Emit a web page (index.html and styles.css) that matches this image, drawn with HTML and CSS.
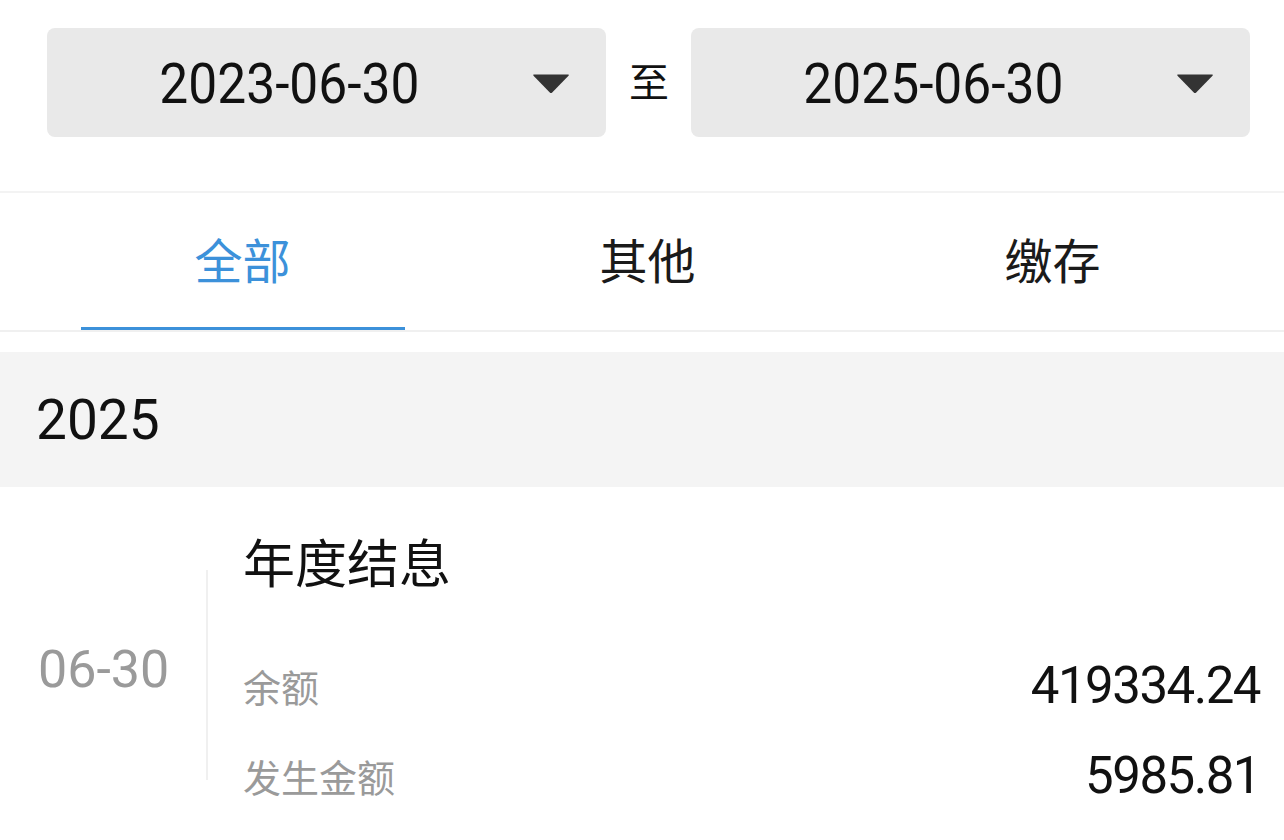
FILE: index.html
```html
<!DOCTYPE html>
<html lang="zh-CN">
<head>
<meta charset="utf-8">
<title>明细</title>
<link rel="stylesheet" href="styles.css">
</head>
<body>
<div class="page">
  <div class="range">
    <div class="picker">
      <div class="picker-text"><span class="date">2023-06-30</span></div>
      <svg class="caret" width="38" height="21" viewBox="0 0 38 21"><path d="M2 1.5 H36 Q37.5 1.5 36.5 2.8 L20.2 19.5 Q19 20.6 17.8 19.5 L1.5 2.8 Q0.5 1.5 2 1.5 Z" fill="#333"/></svg>
    </div>
    <div class="to">至</div>
    <div class="picker">
      <div class="picker-text"><span class="date">2025-06-30</span></div>
      <svg class="caret" width="38" height="21" viewBox="0 0 38 21"><path d="M2 1.5 H36 Q37.5 1.5 36.5 2.8 L20.2 19.5 Q19 20.6 17.8 19.5 L1.5 2.8 Q0.5 1.5 2 1.5 Z" fill="#333"/></svg>
    </div>
  </div>

  <div class="tabs">
    <div class="tab active"><span>全部</span></div>
    <div class="tab"><span>其他</span></div>
    <div class="tab"><span>缴存</span></div>
  </div>

  <div class="year">2025</div>

  <div class="item">
    <div class="item-date">06-30</div>
    <div class="divider"></div>
    <div class="item-body">
      <div class="item-title">年度结息</div>
      <div class="row"><span class="label">余额</span><span class="value">419334.24</span></div>
      <div class="row"><span class="label">发生金额</span><span class="value">5985.81</span></div>
    </div>
  </div>
</div>
</body>
</html>
```

FILE: styles.css
```css
html, body {
  margin: 0;
  padding: 0;
  background: #ffffff;
}

body {
  font-family: Roboto, "Noto Sans CJK SC", "Noto Sans", sans-serif;
  color: #111111;
}

.page {
  width: 1284px;
  height: 840px;
  overflow: hidden;
}

/* date range */
.range {
  display: flex;
  align-items: center;
  padding: 28px 34px 0 47px;
  height: 109px;
}

.picker {
  width: 559px;
  height: 109px;
  background: #e9e9e9;
  border-radius: 8px;
  display: flex;
  align-items: center;
  flex-shrink: 0;
}

.picker-text {
  flex: 1;
  display: flex;
  justify-content: center;
}

.date {
  display: inline-block;
  font-size: 56px;
  line-height: 60px;
  color: #111;
  transform: scaleX(0.92);
  margin-top: 2px;
}

.caret {
  margin-right: 36px;
  margin-top: 2px;
  flex-shrink: 0;
}

.to {
  width: 38px;
  margin: -6px 24px 0 23px;
  font-family: "Noto Sans CJK SC", sans-serif;
  font-size: 40px;
  line-height: 44px;
  color: #111;
  text-align: center;
}

/* tabs */
.tabs {
  margin-top: 54px;
  border-top: 2px solid #f3f3f3;
  border-bottom: 2px solid #f0f0f0;
  display: flex;
  padding: 0 29px 0 40px;
  height: 137px;
}

.tab {
  flex: 1;
  position: relative;
  display: flex;
  align-items: center;
  justify-content: center;
  font-family: "Noto Sans CJK SC", sans-serif;
  font-size: 48px;
  color: #1a1a1a;
}

.tab span {
  margin-top: -8px;
}

.tab.active {
  color: #3c91da;
}

.tab.active::after {
  content: "";
  position: absolute;
  left: 10%;
  right: 10%;
  bottom: 0;
  height: 3px;
  background: #3c91da;
}

/* year header */
.year {
  margin-top: 20px;
  height: 135px;
  background: #f4f4f4;
  display: flex;
  align-items: center;
  padding-left: 36px;
  font-size: 55px;
  color: #111;
}

/* item */
.item {
  display: flex;
  align-items: flex-start;
}

.item-date {
  width: 168px;
  padding-left: 38px;
  margin-top: 153px;
  font-size: 52px;
  line-height: 60px;
  color: #9a9a9a;
}

.divider {
  width: 2px;
  height: 210px;
  margin-top: 83px;
  background: #f0f0f0;
}

.item-body {
  flex: 1;
  padding: 44px 24px 0 35px;
}

.item-title {
  font-family: "Noto Sans CJK SC", sans-serif;
  font-weight: 400;
  font-size: 52px;
  line-height: 60px;
  color: #111;
  margin-bottom: 49px;
}

.row {
  display: flex;
  justify-content: space-between;
  align-items: center;
  height: 90px;
}

.label {
  font-family: "Noto Sans CJK SC", sans-serif;
  font-size: 38px;
  color: #9a9a9a;
}

.value {
  font-size: 51px;
  letter-spacing: -1.5px;
  color: #111;
}
```
